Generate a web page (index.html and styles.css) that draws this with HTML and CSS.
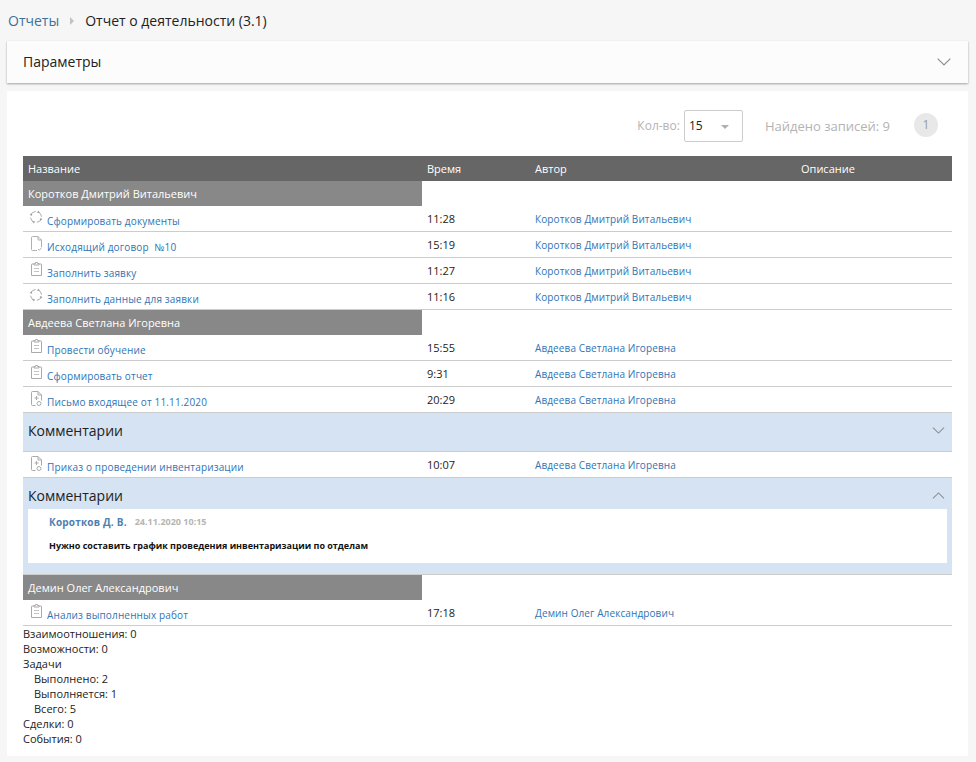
FILE: index.html
```html
<!DOCTYPE html>
<html lang="ru">
<head>
<meta charset="utf-8">
<title>Отчет о деятельности</title>
<link rel="stylesheet" href="styles.css">
</head>
<body>
<svg class="defs" width="0" height="0">
  <defs>
    <symbol id="i-cycle" viewBox="0 0 14 14">
      <circle cx="7" cy="7" r="5.500" fill="none" stroke="#adadad" stroke-width="1" stroke-dasharray="6 2.640" stroke-dashoffset="-1.500"/>
      <path d="M9.300.6l1.700 2.300-2.900.2zM13.400 9.300l-2.300 1.700-.2-2.900zM4.700 13.400L3 11.100l2.900-.2zM.6 4.700L2.900 3l.2 2.900z" fill="#a6a6a6"/>
    </symbol>
    <symbol id="i-doc" viewBox="0 0 11 15">
      <path d="M6 14.500H1.500a1 1 0 0 1-1-1v-12a1 1 0 0 1 1-1H7l3.500 3.500V11" fill="none" stroke="#b0b0b0"/>
      <path d="M7 .5V4h3.500" fill="none" stroke="#b0b0b0"/>
      <path d="M7 13l1.300 1.300 2.200-2.600" fill="none" stroke="#b0b0b0"/>
    </symbol>
    <symbol id="i-task" viewBox="0 0 11 14">
      <path d="M3 2H1a.5.5 0 0 0-.5.5v11h10v-11A.5.5 0 0 0 10 2H8" fill="none" stroke="#aaa"/>
      <path d="M3 3V1.500h1.500v-1h2v1H8V3z" fill="none" stroke="#aaa"/>
      <path d="M3 6.500h5M3 9.500h5" stroke="#c4c4c4"/>
    </symbol>
    <symbol id="i-mail" viewBox="0 0 11 15">
      <path d="M4.500 14.500h-3a1 1 0 0 1-1-1v-12a1 1 0 0 1 1-1H7l3.500 3.500V9.500" fill="none" stroke="#aaa"/>
      <path d="M7 .5V4h3.500" fill="none" stroke="#aaa"/>
      <path d="M5.500 5v4M3.500 7h4" stroke="#aaa"/>
      <circle cx="8" cy="12.500" r="2" fill="none" stroke="#aaa"/>
    </symbol>
    <symbol id="i-down" viewBox="0 0 14 8">
      <path d="M.7.7L7 7l6.300-6.300" fill="none" stroke="#8f8f8f" stroke-width="1.200"/>
    </symbol>
    <symbol id="i-up" viewBox="0 0 14 8">
      <path d="M.7 7.300L7 1l6.300 6.300" fill="none" stroke="#8f8f8f" stroke-width="1.200"/>
    </symbol>
  </defs>
</svg>

<nav class="crumbs">
  <a class="crumb-link" href="#">Отчеты</a>
  <span class="crumb-sep"></span>
  <span class="crumb-current">Отчет о деятельности (3.1)</span>
</nav>

<section class="params">
  <span>Параметры</span>
  <svg class="chev-lg"><use href="#i-down"/></svg>
</section>

<main class="card">
  <div class="toolbar">
    <span class="tool-label">Кол-во:</span>
    <div class="select"><span>15</span><i class="caret"></i></div>
    <span class="found">Найдено записей: 9</span>
    <span class="page">1</span>
  </div>

  <div class="row head">
    <div>Название</div><div>Время</div><div>Автор</div><div>Описание</div>
  </div>

  <div class="group">Коротков Дмитрий Витальевич</div>
  <div class="row item">
    <div class="name"><svg class="ico ico-cycle"><use href="#i-cycle"/></svg><a href="#">Сформировать документы</a></div>
    <div class="time">11:28</div><div><a class="author" href="#">Коротков Дмитрий Витальевич</a></div><div></div>
  </div>
  <div class="row item">
    <div class="name"><svg class="ico ico-doc"><use href="#i-doc"/></svg><a href="#">Исходящий договор &nbsp;№10</a></div>
    <div class="time">15:19</div><div><a class="author" href="#">Коротков Дмитрий Витальевич</a></div><div></div>
  </div>
  <div class="row item">
    <div class="name"><svg class="ico ico-task"><use href="#i-task"/></svg><a href="#">Заполнить заявку</a></div>
    <div class="time">11:27</div><div><a class="author" href="#">Коротков Дмитрий Витальевич</a></div><div></div>
  </div>
  <div class="row item">
    <div class="name"><svg class="ico ico-cycle"><use href="#i-cycle"/></svg><a href="#">Заполнить данные для заявки</a></div>
    <div class="time">11:16</div><div><a class="author" href="#">Коротков Дмитрий Витальевич</a></div><div></div>
  </div>

  <div class="group">Авдеева Светлана Игоревна</div>
  <div class="row item">
    <div class="name"><svg class="ico ico-task"><use href="#i-task"/></svg><a href="#">Провести обучение</a></div>
    <div class="time">15:55</div><div><a class="author" href="#">Авдеева Светлана Игоревна</a></div><div></div>
  </div>
  <div class="row item">
    <div class="name"><svg class="ico ico-task"><use href="#i-task"/></svg><a href="#">Сформировать отчет</a></div>
    <div class="time">9:31</div><div><a class="author" href="#">Авдеева Светлана Игоревна</a></div><div></div>
  </div>
  <div class="row item">
    <div class="name"><svg class="ico ico-mail"><use href="#i-mail"/></svg><a href="#">Письмо входящее от 11.11.2020</a></div>
    <div class="time">20:29</div><div><a class="author" href="#">Авдеева Светлана Игоревна</a></div><div></div>
  </div>
  <div class="comments closed">
    <div class="comments-head"><span>Комментарии</span><svg class="chev"><use href="#i-down"/></svg></div>
  </div>
  <div class="row item">
    <div class="name"><svg class="ico ico-mail"><use href="#i-mail"/></svg><a href="#">Приказ о проведении инвентаризации</a></div>
    <div class="time">10:07</div><div><a class="author" href="#">Авдеева Светлана Игоревна</a></div><div></div>
  </div>
  <div class="comments open">
    <div class="comments-head"><span>Комментарии</span><svg class="chev"><use href="#i-up"/></svg></div>
    <div class="comment">
      <div class="comment-meta"><a href="#">Коротков Д. В.</a><span>24.11.2020 10:15</span></div>
      <p>Нужно составить график проведения инвентаризации по отделам</p>
    </div>
  </div>

  <div class="group">Демин Олег Александрович</div>
  <div class="row item">
    <div class="name"><svg class="ico ico-task"><use href="#i-task"/></svg><a href="#">Анализ выполненных работ</a></div>
    <div class="time">17:18</div><div><a class="author" href="#">Демин Олег Александрович</a></div><div></div>
  </div>

  <ul class="summary">
    <li>Взаимоотношения: 0</li>
    <li>Возможности: 0</li>
    <li>Задачи</li>
    <li class="sub">Выполнено: 2</li>
    <li class="sub">Выполняется: 1</li>
    <li class="sub">Всего: 5</li>
    <li>Сделки: 0</li>
    <li>События: 0</li>
  </ul>
</main>
</body>
</html>
```

FILE: styles.css
```css
* { box-sizing: border-box; }
html, body { margin: 0; padding: 0; }
body {
  background: #f6f6f6;
  font-family: "Open Sans", sans-serif;
  font-size: 11px;
  color: #1a1a1a;
  height: 762px;
  overflow: hidden;
  padding: 0 8px 0 7px;
}
a { text-decoration: none; color: #2f74b5; }
.defs { position: absolute; }

.crumbs {
  height: 41px;
  display: flex;
  align-items: center;
  font-size: 14px;
  padding-left: 1px;
}
.crumb-link { color: #3d7198; }
.crumb-sep {
  width: 0; height: 0;
  margin: 0 11px 0 11px;
  border-left: 4px solid #c2c2c2;
  border-top: 4px solid transparent;
  border-bottom: 4px solid transparent;
}
.crumb-current { color: #222; }

.params {
  height: 42px;
  background: #fcfcfc;
  box-shadow: 0 1px 2px rgba(0,0,0,.35);
  display: flex;
  align-items: center;
  justify-content: space-between;
  padding: 0 17px 2px 16px;
  font-size: 14px;
  color: #222;
}
.chev-lg { width: 14px; height: 8px; margin-top: 2px; }

.card {
  margin-top: 8px;
  height: 665px;
  background: #fff;
  padding: 0 16px;
}

.toolbar {
  height: 65px;
  display: flex;
  align-items: center;
  justify-content: flex-end;
  padding-top: 4px;
  color: #b3b3b3;
  font-size: 12px;
  margin-right: 14px;
}
.select {
  width: 59px;
  height: 32px;
  margin-left: 4px;
  border: 1px solid #ccc;
  border-radius: 2px;
  display: flex;
  align-items: center;
  justify-content: space-between;
  padding: 0 13px 0 4px;
  color: #222;
  font-size: 12px;
}
.caret {
  width: 0; height: 0;
  margin-top: 2px;
  border-top: 4px solid #b0b0b0;
  border-left: 4px solid transparent;
  border-right: 4px solid transparent;
}
.found { margin-left: 22px; font-size: 13px; }
.page {
  width: 24px;
  height: 24px;
  margin-left: 24px;
  border-radius: 50%;
  background: #e8e8e8;
  display: flex;
  align-items: center;
  justify-content: center;
  font-size: 12px;
  color: #9a9a9a;
  margin-top: -2px;
}

.row {
  display: grid;
  grid-template-columns: 399px 108px 266px 1fr;
}
.row > div { padding-left: 5px; }
.head {
  height: 25px;
  background: #666;
  color: #fff;
  line-height: 26px;
}
.group {
  width: 399px;
  height: 25px;
  background: #888;
  color: #fff;
  line-height: 26px;
  padding-left: 5px;
}
.item {
  height: 26px;
  border-bottom: 1px solid #ccc;
}
.item > .name {
  display: flex;
  align-items: flex-start;
  padding-left: 6px;
  position: relative;
}
.name a {
  position: absolute;
  left: 24px;
  top: 8px;
  font-size: 10px;
  letter-spacing: .15px;
  line-height: 15px;
  white-space: nowrap;
}
.ico { flex: none; margin-top: 4px; }
.ico-cycle { width: 14px; height: 14px; }
.ico-doc { width: 11px; height: 15px; margin-left: 2px; }
.ico-task { width: 11px; height: 14px; margin-left: 2px; }
.ico-mail { width: 11px; height: 15px; margin-left: 2px; }
.time { line-height: 26px; color: #222; }
.author {
  font-size: 10px;
  letter-spacing: .1px;
  line-height: 26px;
  white-space: nowrap;
}

.comments {
  background: #d5e3f3;
  border-top: 1px solid #ccc;
  border-bottom: 1px solid #ccc;
  margin-top: -1px;
}
.comments.closed { height: 40px; }
.comments.open { height: 98px; }
.comments-head {
  display: flex;
  align-items: center;
  justify-content: space-between;
  padding: 0 7px 0 5px;
  font-size: 14px;
  color: #222;
}
.closed .comments-head { height: 38px; padding-bottom: 3px; }
.open .comments-head { height: 31px; padding-top: 4px; }
.chev { width: 13px; height: 7px; }
.comment {
  margin: 0 5px;
  height: 54px;
  background: #fff;
  padding: 6px 21px 0;
}
.comment-meta {
  font-size: 9px;
  font-weight: 700;
  line-height: 14px;
  display: flex;
  gap: 8px;
}
.comment-meta a { color: #4f7fb0; font-size: 10px; letter-spacing: .2px; }
.comment-meta span { color: #b5b5b5; }
.comment p {
  margin: 10px 0 0;
  font-size: 9px;
  font-weight: 700;
  line-height: 14px;
  color: #111;
}

.summary {
  list-style: none;
  margin: 0;
  padding: 0;
  line-height: 15px;
  color: #222;
}
.summary .sub { padding-left: 11px; }
```
